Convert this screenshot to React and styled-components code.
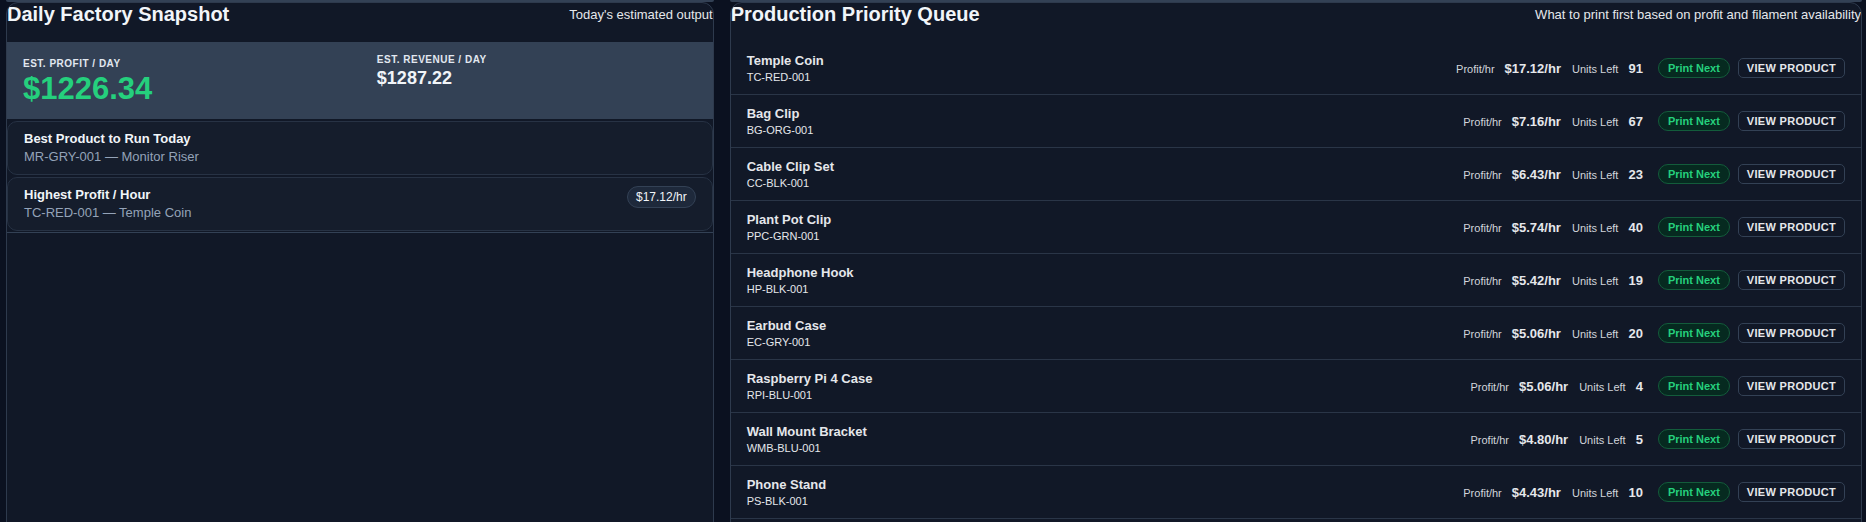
import React from "react";
import styled, { createGlobalStyle } from "styled-components";

const GlobalStyle = createGlobalStyle`
  html, body {
    margin: 0;
    padding: 0;
    background: #0b1120;
  }
  body {
    font-family: "Liberation Sans", Arial, Helvetica, sans-serif;
    color: #e5e7eb;
  }
  *, *::before, *::after { box-sizing: border-box; }
`;

const Page = styled.div`
  height: 522px;
  overflow: hidden;
  padding: 0 4px 0 6px;
`;

const PrevRow = styled.div`
  display: grid;
  grid-template-columns: 5fr 8fr;
  gap: 16px;
  height: 2px;
`;

const PrevEdge = styled.div`
  border-bottom: 2px solid #334155;
  border-radius: 0 0 12px 12px;
`;

const Columns = styled.div`
  display: grid;
  grid-template-columns: 5fr 8fr;
  gap: 16px;
  align-items: start;
`;

const Panel = styled.section`
  background: #111827;
  border: 1px solid #2e3a4d;
  border-radius: 12px;
  min-height: 620px;
  overflow: hidden;
`;

const PanelHeader = styled.header`
  display: flex;
  align-items: center;
  justify-content: space-between;
  margin-bottom: 16px;
`;

const Title = styled.h2`
  margin: 0;
  font-size: 20px;
  line-height: 23px;
  font-weight: 700;
  color: #f1f5f9;
`;

const Subtitle = styled.span`
  font-size: 13px;
  line-height: 16px;
  color: #e5e7eb;
`;

const Stats = styled.div`
  display: grid;
  grid-template-columns: 1fr 1fr;
  column-gap: 34px;
  padding: 12px 16px 14px;
  background: #334155;
`;

const Stat = styled.div`
  padding-top: ${(p) => p.$offset || 0}px;
`;

const StatLabel = styled.div`
  font-size: 10px;
  line-height: 12px;
  font-weight: 700;
  letter-spacing: 0.5px;
  text-transform: uppercase;
  color: #e2e8f0;
`;

const StatValue = styled.div`
  margin-top: ${(p) => (p.$big ? 2 : 1)}px;
  font-size: ${(p) => (p.$big ? 31 : 18)}px;
  line-height: ${(p) => (p.$big ? 33 : 22)}px;
  font-weight: 700;
  color: ${(p) => (p.$accent ? "#25d07d" : "#f1f5f9")};
`;

const CardList = styled.div`
  display: flex;
  flex-direction: column;
  gap: 2px;
  padding: 2px 0 1px;
  border-bottom: 1px solid #334155;
`;

const Card = styled.div`
  display: flex;
  align-items: flex-start;
  justify-content: space-between;
  padding: 8px 16px;
  background: #151d2c;
  border: 1px solid #273244;
  border-radius: 10px;
`;

const CardTitle = styled.div`
  font-size: 13px;
  line-height: 18px;
  font-weight: 700;
  color: #f1f5f9;
`;

const CardMeta = styled.div`
  font-size: 13px;
  line-height: 18px;
  color: #94a3b8;
`;

const Badge = styled.span`
  display: inline-flex;
  align-items: center;
  height: 22px;
  padding: 0 8px;
  border: 1px solid #334155;
  border-radius: 999px;
  background: #1e293b;
  font-size: 12px;
  color: #f1f5f9;
`;

const Row = styled.div`
  display: flex;
  align-items: center;
  justify-content: space-between;
  height: 53px;
  padding: 0 16px;
  border-bottom: 1px solid #2a3547;
`;

const ProductName = styled.div`
  font-size: 13px;
  line-height: 16px;
  font-weight: 700;
  color: #e5e7eb;
`;

const Sku = styled.div`
  margin-top: 1px;
  font-size: 11px;
  line-height: 14px;
  color: #e5e7eb;
`;

const Actions = styled.div`
  display: flex;
  align-items: center;
  gap: 8px;
`;

const Metrics = styled.div`
  display: flex;
  align-items: baseline;
  gap: 11px;
  margin-right: 7px;
`;

const Metric = styled.div`
  display: flex;
  align-items: baseline;
  gap: 10px;
`;

const MetricLabel = styled.span`
  font-size: 11px;
  color: #d1d5db;
`;

const MetricValue = styled.span`
  font-size: 13px;
  font-weight: 700;
  color: #e5e7eb;
`;

const PrintPill = styled.span`
  display: inline-flex;
  align-items: center;
  height: 20px;
  padding: 0 9px;
  border: 1px solid #135c3b;
  border-radius: 999px;
  background: #062a20;
  font-size: 11px;
  font-weight: 700;
  color: #25d07d;
`;

const ViewButton = styled.button`
  height: 20px;
  padding: 0 8px;
  border: 1px solid #334155;
  border-radius: 5px;
  background: transparent;
  font-family: inherit;
  font-size: 11px;
  font-weight: 700;
  letter-spacing: 0.3px;
  text-transform: uppercase;
  color: #e5e7eb;
  cursor: pointer;
`;

const queue = [
  { name: "Temple Coin", sku: "TC-RED-001", rate: "$17.12/hr", left: 91 },
  { name: "Bag Clip", sku: "BG-ORG-001", rate: "$7.16/hr", left: 67 },
  { name: "Cable Clip Set", sku: "CC-BLK-001", rate: "$6.43/hr", left: 23 },
  { name: "Plant Pot Clip", sku: "PPC-GRN-001", rate: "$5.74/hr", left: 40 },
  { name: "Headphone Hook", sku: "HP-BLK-001", rate: "$5.42/hr", left: 19 },
  { name: "Earbud Case", sku: "EC-GRY-001", rate: "$5.06/hr", left: 20 },
  { name: "Raspberry Pi 4 Case", sku: "RPI-BLU-001", rate: "$5.06/hr", left: 4 },
  { name: "Wall Mount Bracket", sku: "WMB-BLU-001", rate: "$4.80/hr", left: 5 },
  { name: "Phone Stand", sku: "PS-BLK-001", rate: "$4.43/hr", left: 10 },
];

export default function App() {
  return (
    <>
      <GlobalStyle />
      <Page>
        <PrevRow>
          <PrevEdge />
          <PrevEdge />
        </PrevRow>
        <Columns>
          <Panel>
            <PanelHeader>
              <Title>Daily Factory Snapshot</Title>
              <Subtitle>Today's estimated output</Subtitle>
            </PanelHeader>
            <Stats>
              <Stat $offset={4}>
                <StatLabel>Est. Profit / Day</StatLabel>
                <StatValue $big $accent>$1226.34</StatValue>
              </Stat>
              <Stat>
                <StatLabel>Est. Revenue / Day</StatLabel>
                <StatValue>$1287.22</StatValue>
              </Stat>
            </Stats>
            <CardList>
              <Card>
                <div>
                  <CardTitle>Best Product to Run Today</CardTitle>
                  <CardMeta>MR-GRY-001 — Monitor Riser</CardMeta>
                </div>
              </Card>
              <Card>
                <div>
                  <CardTitle>Highest Profit / Hour</CardTitle>
                  <CardMeta>TC-RED-001 — Temple Coin</CardMeta>
                </div>
                <Badge>$17.12/hr</Badge>
              </Card>
            </CardList>
          </Panel>
          <Panel>
            <PanelHeader>
              <Title>Production Priority Queue</Title>
              <Subtitle>What to print first based on profit and filament availability</Subtitle>
            </PanelHeader>
            {queue.map((item) => (
              <Row key={item.sku}>
                <div>
                  <ProductName>{item.name}</ProductName>
                  <Sku>{item.sku}</Sku>
                </div>
                <Actions>
                  <Metrics>
                    <Metric>
                      <MetricLabel>Profit/hr</MetricLabel>
                      <MetricValue>{item.rate}</MetricValue>
                    </Metric>
                    <Metric>
                      <MetricLabel>Units Left</MetricLabel>
                      <MetricValue>{item.left}</MetricValue>
                    </Metric>
                  </Metrics>
                  <PrintPill>Print Next</PrintPill>
                  <ViewButton>View Product</ViewButton>
                </Actions>
              </Row>
            ))}
          </Panel>
        </Columns>
      </Page>
    </>
  );
}
